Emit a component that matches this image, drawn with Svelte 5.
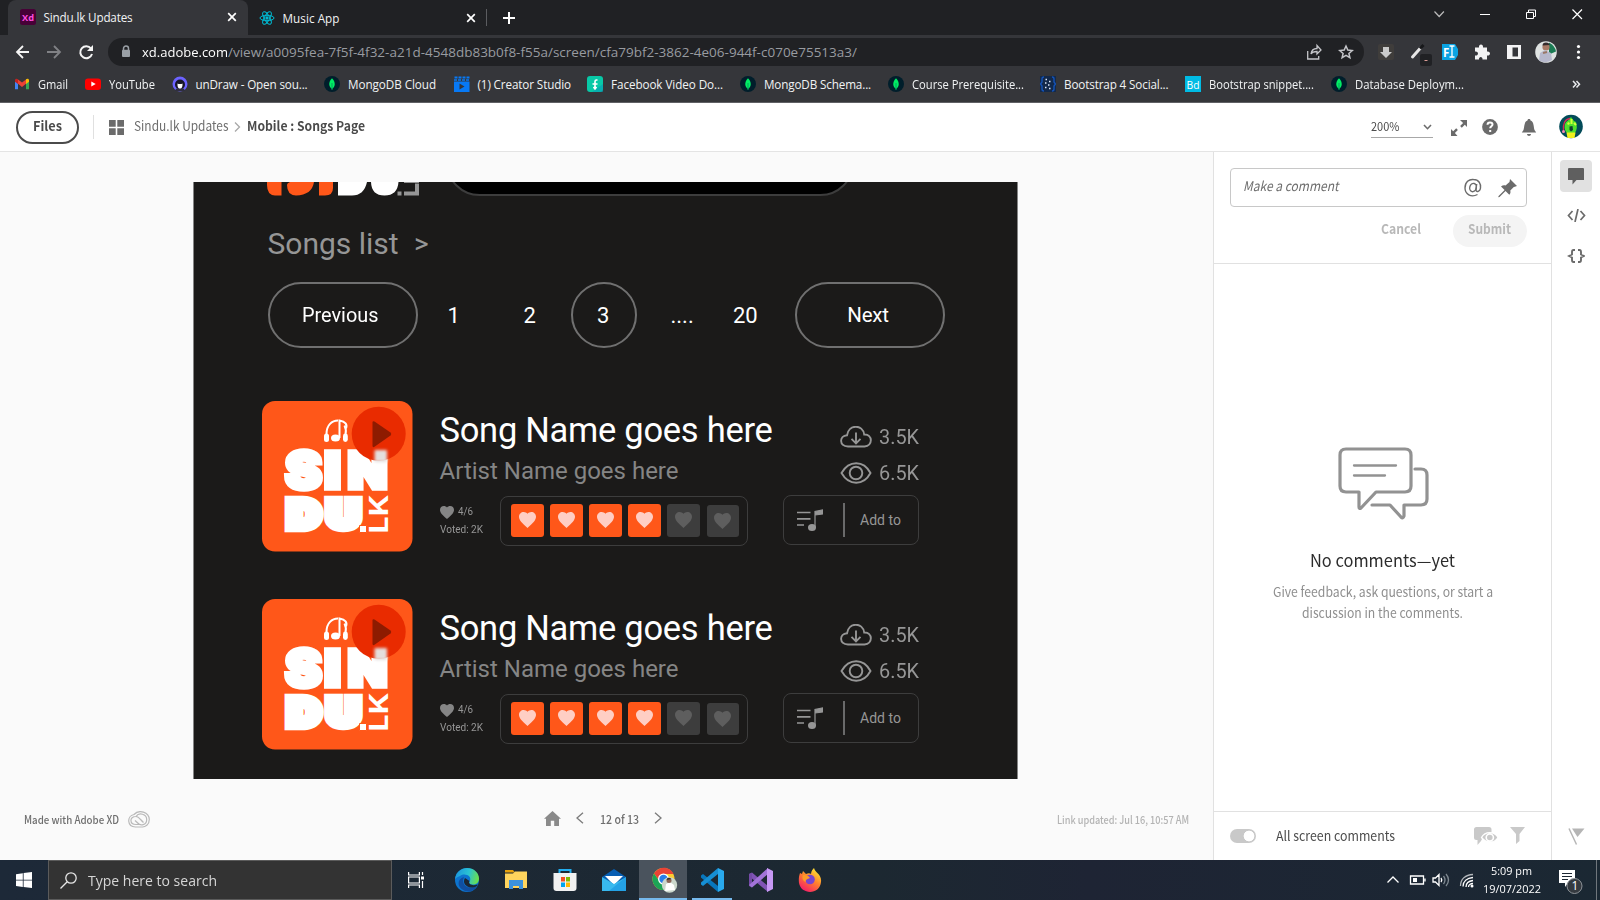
<script>
  // Makes a label take the given width: small differences go into the
  // letter spacing, larger ones condense the glyphs.
  function fit(node, width) {
    if (getComputedStyle(node).display === 'inline') node.style.display = 'inline-block';
    const natural = node.getBoundingClientRect().width;
    const ratio = width / natural;
    if (Math.abs(ratio - 1) < 0.03) {
      node.style.letterSpacing = (width - natural) / [...node.textContent].length + 'px';
    } else {
      node.style.transformOrigin = '0 50%';
      node.style.transform = `scaleX(${ratio})`;
      node.style.width = natural + 'px';
      node.style.marginRight = width - natural + 'px';
    }
  }

  const bookmarks = [
    { icon: 'gmail', text: 'Gmail', w: 30, cell: 71 },
    { icon: 'youtube', text: 'YouTube', w: 46, cell: 86.5 },
    { icon: 'undraw', text: 'unDraw - Open sou...', w: 112, cell: 152.5 },
    { icon: 'mongo', text: 'MongoDB Cloud', w: 88, cell: 129.5 },
    { icon: 'studio', text: '(1) Creator Studio', w: 93.5, cell: 133.5 },
    { icon: 'fvd', text: 'Facebook Video Do...', w: 112, cell: 153 },
    { icon: 'mongo', text: 'MongoDB Schema...', w: 107, cell: 148 },
    { icon: 'mongo', text: 'Course Prerequisite...', w: 112, cell: 152 },
    { icon: 'braces', text: 'Bootstrap 4 Social...', w: 104.5, cell: 145 },
    { icon: 'bd', text: 'Bootstrap snippet....', w: 105, cell: 146 },
    { icon: 'mongo', text: 'Database Deploym...', w: 109, cell: 135 }
  ];

  const songs = [
    { title: 'Song Name goes here', artist: 'Artist Name goes here', downloads: '3.5K', views: '6.5K', rating: 4 },
    { title: 'Song Name goes here', artist: 'Artist Name goes here', downloads: '3.5K', views: '6.5K', rating: 4 }
  ];
  const heart = 'M12 21.4C6 16 2 12.6 2 8.5 2 5.4 4.4 3 7.5 3c1.8 0 3.4.8 4.5 2.1C13.1 3.8 14.7 3 16.5 3 19.6 3 22 5.4 22 8.5c0 4.1-4 7.5-10 12.9z';
</script>

{#snippet bookmarkIcon(kind)}
  <svg width="16" height="16" viewBox="0 0 16 16">
    {#if kind === 'gmail'}
      <path d="M1 3.500v9.800h3V7z" fill="#4285f4" /><path d="M15 3.500v9.800h-3V7z" fill="#34a853" />
      <path d="M4 3.600l4 3 4-3v4.200L8 11 4 7.800z" fill="#ea4335" />
      <path d="M1 4.500C1 2.600 2.700 2.200 4 3.300v4.600L1 5.700z" fill="#c5221f" /><path d="M15 4.500c0-1.900-1.700-2.300-3-1.200v4.600l3-2.200z" fill="#fbbc04" />
    {:else if kind === 'youtube'}
      <rect y="2.500" width="16" height="11.500" rx="3" fill="#f00" /><path d="M6.300 5.600v5l4.400-2.500z" fill="#fff" />
    {:else if kind === 'undraw'}
      <circle cx="8" cy="8" r="7.500" fill="#6c63ff" /><circle cx="8" cy="8.500" r="5" fill="#171628" />
      <path d="M3 15c1-3 2-3 5-3s4 0 5 3z" fill="#2f2e41" /><path d="M5.500 7.500c1 .7 4 .7 5 0 .2 4-1 5-2.500 5s-2.700-1-2.500-5z" fill="#fff" />
    {:else if kind === 'mongo'}
      <circle cx="8" cy="8" r="8" fill="#001e2b" /><path d="M8 2.300C12 6.500 11.300 10.700 8 13 4.700 10.700 4 6.500 8 2.300z" fill="#00ed64" /><path d="M8 7v7" stroke="#00a35c" stroke-width="1" />
    {:else if kind === 'studio'}
      <path d="M0 5.500h15.500V16H0z" fill="#0779f5" /><path d="M0 4h15.500" stroke="#0779f5" stroke-width="1.500" stroke-dasharray="3 1" /><path d="M.5 1.500h15" stroke="#0779f5" stroke-width="2" stroke-dasharray="3 1" /><path d="M5.500 7.500v6l5-3z" fill="#35363a" />
    {:else if kind === 'fvd'}
      <rect width="16" height="16" rx="3" fill="#08c9a7" /><path d="M16 8v8H5z" fill="#0797b6" opacity=".55" /><path d="M10.500 4H9.500Q8 4 8 5.500V13M5.500 8H10.500M6.500 11l1.500 2 1.500-2" fill="none" stroke="#fff" stroke-width="1.600" />
    {:else if kind === 'braces'}
      <path d="M0 0h16v16H0z" fill="#13294a" /><path d="M4 1Q2 1 2 3v3L.5 8 2 10v3q0 2 2 2M12 1q2 0 2 2v3l1.500 2L14 10v3q0 2-2 2" fill="none" stroke="#1453b8" stroke-width="1.400" />
      <path d="M5.500 3.500h1.500M9 5.500h1.500M5 7h1.500M8 9h1.500M5 11.500h1.500M9 12.500h1.500" stroke="#dbe6fa" stroke-width="1.400" />
    {:else}
      <path d="M0 0h16v16H0z" fill="#00bbe4" /><text x="1.500" y="12.500" font-size="11.500" textLength="13" lengthAdjust="spacingAndGlyphs" fill="#fff">Bd</text>
    {/if}
  </svg>
{/snippet}

{#snippet closeX()}
  <svg width="10" height="10" viewBox="0 0 10 10"><path d="M1.200 1.200l7.600 7.600M8.800 1.200L1.200 8.800" stroke="#fff" stroke-width="1.700" /></svg>
{/snippet}

{#snippet cover()}
  <svg class="cover" width="151" height="151" viewBox="0 0 151 151">
    <rect width="150.500" height="150.500" rx="13" fill="#ff5719" />
    <g fill="none" stroke="#fff" stroke-width="2">
      <path d="M64.500 33C64.500 24 70 19.500 76 19.500M83.500 33.500c1-4 0-7-1-9" />
      <path d="M77.500 37V19.500c6 1 8 4 6.500 8" />
    </g>
    <g fill="#fff"><ellipse cx="73.500" cy="37" rx="4.500" ry="3.500" /><rect x="62" y="32.500" width="5" height="8.500" rx="2.500" /><rect x="81" y="32.500" width="4.800" height="8.500" rx="2.400" /></g>
    <g class="brand" fill="#fff" stroke="#fff">
      <text y="87.300" font-size="49" stroke-width="5.500"><tspan x="23.500" textLength="36" lengthAdjust="spacingAndGlyphs">S</tspan><tspan x="62.500" textLength="16" lengthAdjust="spacingAndGlyphs">I</tspan><tspan x="86" textLength="39" lengthAdjust="spacingAndGlyphs">N</tspan></text>
      <text y="126.800" font-size="39" stroke-width="8.500"><tspan x="25.500" textLength="33" lengthAdjust="spacingAndGlyphs">D</tspan><tspan x="65" textLength="33" lengthAdjust="spacingAndGlyphs">U</tspan></text>
      <text class="suffix" transform="translate(125.500 132.500) rotate(-90)" font-size="26" stroke="none" textLength="39" lengthAdjust="spacingAndGlyphs">LK</text>
    </g>
    <path d="M97.500 124.500h7v7h-7z" fill="#fff" stroke="#ff5719" stroke-width="1" />
    <circle cx="116.700" cy="32.800" r="27" fill="#e92b00" />
    <path d="M110.500 21.500v23q0 2.500 2 1.300l16-11.300q1.500-1.500 0-3l-16-11q-2-1-2 1z" fill="#8e1b00" />
    <rect class="glow" x="112.500" y="49" width="12.500" height="12" rx="1" fill="#e4dfde" />
  </svg>
{/snippet}

<div class="screen">
  <header class="browser">
    <div class="tabs">
      <div class="tab active">
        <svg width="16" height="16" viewBox="0 0 16 16"><rect width="16" height="16" rx="2.500" fill="#470137" /><text x="2" y="11.700" font-size="9.500" font-weight="700" textLength="12" lengthAdjust="spacingAndGlyphs" fill="#ff4be0">Xd</text></svg>
        <span use:fit={89}>Sindu.lk Updates</span><i class="fill"></i>{@render closeX()}
      </div>
      <div class="tab second">
        <svg width="16" height="16" viewBox="0 0 16 16" fill="none" stroke="#00bcd4" stroke-width="1"><ellipse cx="8" cy="8" rx="7" ry="2.700" /><ellipse cx="8" cy="8" rx="7" ry="2.700" transform="rotate(60 8 8)" /><ellipse cx="8" cy="8" rx="7" ry="2.700" transform="rotate(120 8 8)" /><circle cx="8" cy="8" r="1.200" fill="#00bcd4" /></svg>
        <span use:fit={57}>Music App</span><i class="fill"></i>{@render closeX()}
      </div>
      <div class="newtab"><svg width="12" height="12" viewBox="0 0 12 12"><path d="M6 0v12M0 6h12" stroke="#fff" stroke-width="2" /></svg></div>
      <div class="winctl">
        <svg width="160" height="20" viewBox="0 0 160 20" fill="none" stroke="#fff"><path d="M4.500 7.500l4.700 5 4.700-5" stroke="#bbb" stroke-width="1.200" /><path d="M50 10.500h10" /><path d="M96.500 8.500h7v6h-7zM98.500 8V6h7v6.500H104" /><path d="M142.500 5.500l9.500 9.500M152 5.500l-9.500 9.500" stroke-width="1.200" /></svg>
      </div>
    </div>
    <div class="toolbar">
      <svg class="nav" width="80" height="16" viewBox="0 0 80 16" fill="none" stroke-width="1.800"><path d="M15 8H3M9 2L3 8l6 6" stroke="#f5f5f5" /><path d="M33 8h13M40 2l6 6-6 6" stroke="#808185" /><path d="M77 4.500A6 6 0 1 0 78 10" stroke="#f5f5f5" stroke-width="2" /><path d="M79 1v6h-6z" fill="#f5f5f5" /></svg>
      <div class="address">
        <svg width="10" height="13" viewBox="0 0 10 13"><path d="M2.500 5V3.500a2.500 2.500 0 0 1 5 0V5" fill="none" stroke="#9aa0a6" stroke-width="1.500" /><rect x="1" y="4.700" width="8" height="7.300" rx="1" fill="#9aa0a6" /></svg>
        <span class="host" use:fit={86}>xd.adobe.com</span><span class="path" use:fit={629}>/view/a0095fea-7f5f-4f32-a21d-4548db83b0f8-f55a/screen/cfa79bf2-3862-4e06-944f-c070e75513a3/</span>
        <i class="fill"></i>
        <svg class="actions" width="48" height="18" viewBox="0 0 48 18" fill="none" stroke="#c4c5c9" stroke-width="1.300"><path d="M1.700 8v8h11v-3M5 11c.5-4 3-5.500 6-5.500V2.500l4 4.500-4 4V8.500c-3 0-4.500 0-6 2.500z" /><path d="M40 3l1.800 4.100 4.400.4-3.300 2.900 1 4.300L40 12.400l-3.900 2.300 1-4.300-3.300-2.900 4.400-.4z" stroke-width="1.500" /></svg>
      </div>
      <svg class="extensions" width="222" height="28" viewBox="0 0 222 28">
        <rect x="0" y="6" width="16" height="16" rx="2" fill="#3f3d3b" /><path d="M5 9h6v5h3l-6 6-6-6h3z" fill="#c9c9c9" />
        <path d="M34.500 19l8-9" stroke="#e7e7e7" stroke-width="3" stroke-linecap="round" /><path d="M42 10.500l3.500-3.500" stroke="#17181a" stroke-width="3" /><rect x="42" y="16" width="12" height="12" rx="2" fill="#202124" /><path d="M46.500 22.500h3" stroke="#d99b94" />
        <path d="M64 6h13l3 5v6l-3 5H64z" fill="#0ba4e3" /><text x="65" y="18.500" font-size="11.500" font-weight="700" fill="#fff">F</text><path d="M71.500 8h5M74 8v11M71.500 19h5" stroke="#fff" stroke-width="1.300" />
        <path d="M98 9.500h3c-.7-4 4.700-4 4 0h4v4c4-.7 4 4.700 0 4v4h-4.500c.5-3.500-4-3.500-3.500 0H97v-4c4 .7 4-4.700 0-4v-4z" fill="#f3f3f4" />
        <path d="M129 7h14v14h-14z" fill="#f3f3f4" /><path d="M134.500 9.500h5.500v9h-5.500z" fill="#35363a" />
        <circle cx="168" cy="14" r="10.800" fill="#dfe3e2" /><path d="M171 4.500q6 3 7 9l-7 3z" fill="#1b7b54" /><circle cx="168" cy="9" r="3.600" fill="#a77a66" /><path d="M164.500 7.500q0-3 3.500-3t3.700 2.500z" fill="#342b2c" /><path d="M161 22.500l1-7.500 5-3 6 3 1 7q-6 4-13 .5z" fill="#b6b8cc" /><path d="M165 15l4-1" stroke="#9a7866" stroke-width="2" />
        <g fill="#fff"><circle cx="200.500" cy="8.500" r="1.600" /><circle cx="200.500" cy="14" r="1.600" /><circle cx="200.500" cy="19.500" r="1.600" /></g>
      </svg>
    </div>
    <nav class="bookmarks">
      {#each bookmarks as b}
        <div class="bookmark" style:width="{b.cell}px">{@render bookmarkIcon(b.icon)}<span use:fit={b.w}>{b.text}</span></div>
      {/each}
      <svg class="more" width="9" height="9" viewBox="0 0 9 9"><path d="M1 1l3 3.200L1 7.500M4.500 1l3 3.200-3 3.300" fill="none" stroke="#e8eaed" stroke-width="1.500" /></svg>
    </nav>
  </header>

  <div class="appbar">
    <div class="files"><b use:fit={29}>Files</b></div>
    <i class="rule"></i>
    <svg class="gridicon" width="15" height="15" viewBox="0 0 15 15"><path d="M0 0h6.700v6.700H0zM8.300 0H15v6.700H8.300zM0 8.300h6.700V15H0zM8.300 8.300H15V15H8.300z" fill="#6b6b6b" /></svg>
    <span class="crumb" use:fit={94.5}>Sindu.lk Updates</span>
    <svg class="sep" width="7" height="10" viewBox="0 0 7 10"><path d="M1 .5L5.500 5 1 9.500" fill="none" stroke="#a8a8a8" stroke-width="1.300" /></svg>
    <b class="here" use:fit={118}>Mobile : Songs Page</b>
    <div class="zoom"><span use:fit={28.5}>200%</span><svg width="9" height="6" viewBox="0 0 9 6"><path d="M1 1l3.500 3.700L8 1" fill="none" stroke="#6b6b6b" stroke-width="1.600" /></svg></div>
    <svg class="tools" width="150" height="26" viewBox="0 0 150 26">
      <g fill="#6b6b6b"><path d="M10 6h7v7l-2.200-2.200-3 3-1.700-1.700 3-3zM1 22v-7l2.200 2.200 3-3 1.700 1.700-3 3L7.500 22z" /><circle cx="40" cy="13" r="7.900" /><path d="M79 5c1.200 0 1.500.7 1.500 1.600C84 7.500 83.500 13 84.500 16l1.700 2.500H71.800L73.500 16c1-3 .5-8.500 4-9.400C77.500 5.700 77.800 5 79 5zM77 20h4c0 2.500-4 2.500-4 0z" /></g>
      <path d="M37.500 10.800c0-3.300 5-3 5-.3 0 1.800-2.300 1.800-2.300 3.800M40.200 16v2" fill="none" stroke="#fff" stroke-width="2" />
      <circle cx="121" cy="12.500" r="11.800" fill="#034b59" /><path d="M117 19c-3-3-3-8-1-11l2-1.500L121 3l3 4 2 1c1.500 4 1 8-1 11z" fill="#4fdf2c" /><path d="M116.500 18.500h9l-1 5.500h-7z" fill="#f0f01e" /><path d="M119.500 12.500l3-.5.5 4-2 1.500-1.500-1.500z" fill="#123d31" /><path d="M121.500 5v5M117.500 10l2-1M124 9l2 2" stroke="#d4ff39" stroke-width="2" fill="none" /><path d="M113.500 17C112.500 10 115 5 120 4.500" fill="none" stroke="#d42857" stroke-width="1.300" /><circle cx="113.500" cy="17.500" r="1.500" fill="#f08bb6" />
    </svg>
  </div>

  <main>
    <section class="stage">
      <div class="board">
        <div class="top">
          <svg width="153" height="14" viewBox="0 0 153 14"><g fill="#ff5719"><path d="M0 0h14.500v13.500H8Q0 13 0 3zM20 3q0-2 3-3h24q-2 13-18 13.500Q20 13 20 3zM52 0h14v6q0 7.500-8 7.500h-6z" /></g><path d="M71 0h29q-3 13.500-15 13.500H71zM104 0h27.500q-1 13.500-14 13.500T104 0z" fill="#fff" /><path d="M130.500 9.500h4v4h-4zM137 9.500h11V1.500h4v12h-15zM137 0h15v1h-15z" fill="#969696" /></svg>
          <div class="search"></div>
        </div>
        <div class="list-title"><span use:fit={131}>Songs list</span><span class="gt">&gt;</span></div>
        <div class="pager">
          <div class="pill"><span class="previous" use:fit={76.5}>Previous</span></div>
          <span class="num one">1</span><span class="num two">2</span>
          <div class="pill current"><span class="num">3</span></div>
          <span class="num dots">....</span><span class="num twenty">20</span>
          <div class="pill"><span class="next" use:fit={41.5}>Next</span></div>
        </div>
        {#each songs as song}
          <article class="song">
            {@render cover()}
            <div class="info">
              <div class="title"><span use:fit={333}>{song.title}</span></div>
              <div class="artist"><span use:fit={239}>{song.artist}</span></div>
              <div class="voting">
                <div class="votes">
                  <div><svg width="14" height="13" viewBox="2 3 20 18.400" preserveAspectRatio="none"><path d={heart} fill="#858585" /></svg><span use:fit={15}>{song.rating}/6</span></div>
                  <div><span use:fit={43}>Voted: 2K</span></div>
                </div>
                <div class="rating">
                  {#each [1, 2, 3, 4, 5, 6] as n}
                    <div class="box" class:on={n <= song.rating} class:last={n === 6}><svg width="17" height="16" viewBox="2 3 20 18.400" preserveAspectRatio="none"><path d={heart} fill="currentColor" /></svg></div>
                  {/each}
                </div>
              </div>
            </div>
            <div class="side">
              <div class="stat"><svg width="32" height="22" viewBox="0 0 32 22" fill="none" stroke="#969696" stroke-width="1.900"><path d="M8 20.500C-1 20-1 10 7 9.300 8.500-2 23-2 24.200 8.500 33 8 33 20 24.500 20.500zM16 6.500v10.500M11.500 12.800L16 17.300l4.500-4.500" /></svg><span use:fit={40}>{song.downloads}</span></div>
              <div class="stat"><svg width="32" height="22" viewBox="0 0 32 22" fill="none" stroke="#969696" stroke-width="1.900"><path d="M1.500 11C9-2 23.500-2 30.500 11 23.500 24 9 24 1.500 11z" /><circle cx="16" cy="11" r="6.300" /></svg><span use:fit={40}>{song.views}</span></div>
              <div class="add"><svg width="26" height="23" viewBox="0 0 26 23"><path d="M0 3.500h13.500M0 9.800h13.500M0 16h7" stroke="#969696" stroke-width="1.700" /><ellipse cx="15" cy="18.500" rx="4" ry="3.500" fill="#969696" /><path d="M18 19V2.500L25.500 1v4L18 6" fill="#969696" stroke="#969696" stroke-width="1.200" /></svg><i></i><span use:fit={41}>Add to</span></div>
            </div>
          </article>
        {/each}
      </div>
      <footer class="stagefoot">
        <div class="made"><span use:fit={95}>Made with Adobe XD</span><svg width="22" height="17" viewBox="0 0 22 17" fill="none" stroke="#b9b9b9" stroke-width="1.200"><path d="M7.500 16C-1 16-1.500 5 6 3.500 11-2 21 1 21.300 8.500 21.300 14 17 16 14.500 16z" /><path d="M13 13.500H8c-6.500 0-7-8 0-8 3 0 4.500 3.500 7.500 6M8 5.500C11 1 18.700 3 18.700 8.500c0 6-6.500 6.500-9 3.500L7 9.500" /></svg></div>
        <div class="pages">
          <svg width="17" height="15" viewBox="0 0 17 15"><path d="M8.500 0L17 7.800h-2V15h-4.800V9.800H6.800V15H2V7.800H0z" fill="#8a8a8a" /></svg>
          <svg class="prev" width="8" height="12" viewBox="0 0 8 12"><path d="M7 .7L1 6l6 5.300" fill="none" stroke="#7b7b7b" stroke-width="1.300" /></svg>
          <span use:fit={39}>12 of 13</span>
          <svg class="fwd" width="8" height="12" viewBox="0 0 8 12"><path d="M1 .7L7 6l-6 5.300" fill="none" stroke="#7b7b7b" stroke-width="1.300" /></svg>
        </div>
        <i class="fill"></i>
        <span class="updated" use:fit={132}>Link updated: Jul 16, 10:57 AM</span>
      </footer>
    </section>

    <aside class="comments">
      <div class="compose">
        <div class="field"><em use:fit={95.5}>Make a comment</em><i class="fill"></i>
          <svg width="54" height="20" viewBox="0 0 54 20"><g fill="none" stroke="#6b6b6b" stroke-width="1.400"><path d="M13.500 16.500C7 20 1 16 1 10s4-9 8.500-8.500C15 1.500 17 6 16.500 10c-.5 4-5 5-4.500 1L12.700 6" /><ellipse cx="9.200" cy="9.500" rx="3.300" ry="4.200" transform="rotate(15 9 9)" /></g><path d="M46 1l7 7-2.200.8-1 .2-3.500 3.500c.5 2 0 3.500-1 4.200l-3.800-3.800-6 6-1.300.4.400-1.300 6-6-3.600-3.600c1.500-1.200 3-1.300 4.500-1L45.500 4z" fill="#6b6b6b" /></svg>
        </div>
        <div class="buttons"><b use:fit={40}>Cancel</b><div class="submit"><b use:fit={43}>Submit</b></div></div>
      </div>
      <div class="empty">
        <svg width="92" height="73" viewBox="0 0 92 73" fill="none" stroke="#929292" stroke-width="3.200" stroke-linejoin="round" stroke-linecap="round"><path d="M9 2h59q6 0 6 6v31q0 6-6 6H39L24 61q-2 1-2-1V45H9q-6 0-6-6V8q0-6 6-6z" /><path d="M78 22h6q6 0 6 6v24q0 6-6 6H67v11q-1 3-3 1L53 58H35" /><path d="M17 18.500h42M17 28.500h31" stroke-width="2.300" /></svg>
        <h2><span use:fit={145}>No comments—yet</span></h2>
        <p><span use:fit={220}>Give feedback, ask questions, or start a</span></p>
        <p><span use:fit={161}>discussion in the comments.</span></p>
      </div>
      <footer class="filter">
        <i class="toggle"></i><span use:fit={119}>All screen comments</span><i class="fill"></i>
        <svg width="52" height="20" viewBox="0 0 52 20"><path d="M2.500 1h12.500q2.500 0 2.500 2.500v5L10 9l-3 6-3.500 4v-5h-1Q0 14 0 11.500v-8Q0 1 2.500 1z" fill="#c9c9c9" /><path d="M7.500 11.500C11 5 20.500 5 24 11.500 20.500 17.500 12 17.500 7.500 11.500z" fill="#c9c9c9" stroke="#fff" stroke-width="1.300" /><circle cx="15.800" cy="11.500" r="3.600" fill="#c9c9c9" stroke="#fff" stroke-width="1.600" /><path d="M36 1h15l-5.500 7v7L42 18V8z" fill="#c9c9c9" /></svg>
      </footer>
    </aside>

    <aside class="rail">
      <div class="railbtn on"><svg width="16" height="17" viewBox="0 0 16 17"><path d="M1 0h14q1 0 1 1v11H8.500L4.500 16.500V12H0V1q0-1 1-1z" fill="#5f5f5f" /></svg></div>
      <div class="railbtn code"><svg width="19" height="13" viewBox="0 0 19 13" fill="none" stroke="#6b6b6b" stroke-width="1.700"><path d="M5.500 2L1.500 6.500l4 4.500M13.500 2l4 4.500-4 4.500M11 0L8 13" /></svg></div>
      <div class="railbtn"><svg width="18" height="14" viewBox="0 0 18 14" fill="none" stroke="#6b6b6b" stroke-width="1.900"><path d="M8 1H6.500Q5 1 5 3v2.500L2 7l3 1.500V11q0 2 1.500 2H8M11 1h1.500Q14 1 14 3v2.500L17 7l-3 1.500V11q0 2-1.500 2H11" /></svg></div>
      <svg class="flag" width="17" height="17" viewBox="0 0 17 17"><path d="M1 .5l7.500 16" stroke="#b5b5b5" stroke-width="1.500" /><path d="M4 .5h12.500L9.500 9z" fill="#b5b5b5" /></svg>
    </aside>
  </main>

  <footer class="taskbar">
    <div class="start"><svg width="16" height="16" viewBox="0 0 16 16"><path d="M0 2.200L6.800 1.200v6.500H0zM7.600 1L16 0v7.700H7.600zM0 8.400h6.800v6.500L0 13.900zM7.600 8.400H16V16l-8.400-1z" fill="#fff" /></svg></div>
    <div class="find"><svg width="17" height="17" viewBox="0 0 17 17" fill="none" stroke="#e6e6e6" stroke-width="1.300"><circle cx="11" cy="6" r="5.200" /><path d="M7.200 9.800L.5 16.500" /></svg><span use:fit={129}>Type here to search</span></div>
    <div class="task view"><svg width="16" height="16" viewBox="0 0 16 16" fill="none" stroke="#fff" stroke-width="1.200"><path d="M.6 0v3h10.800V0M.6 16v-3h10.800v3M.6 5h10.800v6H.6zM14.500 0v3M14.500 9v7" /><path d="M13 4.500h3v3h-3z" fill="#fff" stroke="none" /></svg></div>
    <div class="task"><svg width="24" height="24" viewBox="0 0 24 24"><defs><linearGradient id="edge" x1="0" y1=".3" x2="1" y2=".5"><stop offset="0" stop-color="#1b95dd" /><stop offset=".55" stop-color="#2ac3d3" /><stop offset="1" stop-color="#6be04b" /></linearGradient></defs><circle cx="12" cy="12" r="12" fill="#0d74ce" /><path d="M0 11C1 4 6 0 12 0c7 0 12 5 12 10.500 0 5-4 6.500-7 6-3-.4-3-2-2-3.500 2-5-5-8.500-10-5Q2 9 0 11z" fill="url(#edge)" /><path d="M8 12c0 7 6 9.500 14 6.500-4 6-11 6.500-16 2-4-4-3-10 3-11.500z" fill="#104ea0" /><path d="M10 10c-3 5 1 9 6 9.500 3 0 4-.5 6-1.500 1-1 1-2-.5-1.300-4 1.500-9-.7-7-3.700z" fill="#1d2733" /></svg></div>
    <div class="task"><svg width="22" height="20" viewBox="0 0 22 20"><path d="M0 0h8l2 2.500H0z" fill="#e8a20c" /><path d="M0 3.500h8L10 1.500h12V18H0z" fill="#ffd45d" /><path d="M4 19v-9h14v9h-4v-3H8v3z" fill="#3c91dc" /></svg></div>
    <div class="task"><svg width="24" height="24" viewBox="0 0 24 24"><path d="M6.500 7V2h11v5" fill="none" stroke="#22aef0" stroke-width="2" /><path d="M.5 5h23v15q0 3-3 3h-17q-3 0-3-3z" fill="#f1f1f1" /><path d="M8 9h4v4.500H8z" fill="#f25022" /><path d="M13 9h4v4.500h-4z" fill="#7fba00" /><path d="M8 14.500h4V19H8z" fill="#00a4ef" /><path d="M13 14.500h4V19h-4z" fill="#ffb900" /></svg></div>
    <div class="task"><svg width="24" height="22" viewBox="0 0 24 22"><path d="M0 8L12 0l12 8-12 8z" fill="#075eb3" /><path d="M3 7h18l-9 9z" fill="#fff" /><path d="M0 8l12 7 12-7v14H0z" fill="#38b9ef" /><path d="M24 8L7 22h17z" fill="#1490df" opacity=".55" /></svg></div>
    <div class="task selected"><svg width="26" height="26" viewBox="0 0 26 26"><circle cx="11.500" cy="12" r="11" fill="#ffcc30" /><path d="M2 6.500C7-1.500 18-1 21.500 7h-10l-4 7z" fill="#e94335" /><path d="M2 6.500A11 11 0 0 0 12 23l4-7-8-1z" fill="#1ca456" /><circle cx="11.500" cy="12" r="5.500" fill="#fff" /><circle cx="11.500" cy="12" r="4.200" fill="#287ee8" /><circle cx="17.500" cy="18" r="7.700" fill="#cbd7cc" /><path d="M13 24l1-7 4-2 4 3 1 5z" fill="#fff" /><circle cx="17" cy="13.500" r="2.500" fill="#8b6457" /><path d="M14.500 13q1-4 5-1z" fill="#352d2e" /></svg></div>
    <div class="task open"><svg width="24" height="24" viewBox="0 0 24 24"><path d="M1 7.500l2-1.500L18 18v6L1 9.500z" fill="#0877bd" /><path d="M1 16.500l2 1.500L18 6V0L1 14.500z" fill="#168fd4" /><path d="M18 0l6 3v18l-6 3z" fill="#29a9ed" /></svg></div>
    <div class="task"><svg width="24" height="24" viewBox="0 0 24 24"><path d="M0 6l3-1.500L19 18v6L0 8z" fill="#8053b5" /><path d="M0 6v12l3 1.500V5z" fill="#754ba7" /><path d="M3 19.500L19 6V0L0 17z" fill="#a273d8" /><path d="M18 0l6 3v18l-6 3z" fill="#c798f4" /></svg></div>
    <div class="task"><svg width="24" height="24" viewBox="0 0 24 24"><defs><linearGradient id="fox" x1=".8" y1="0" x2=".2" y2="1"><stop offset="0" stop-color="#ffed35" /><stop offset=".45" stop-color="#ff842c" /><stop offset="1" stop-color="#f5156c" /></linearGradient></defs><path d="M2 5l2 1 1-3 3 3c2-1 4-1 5 0 0-3 2-5 3-6 1 5 8 6 7 14-1 13-20 13-22 1-.500-4 0-7 1-10z" fill="url(#fox)" /><circle cx="12" cy="11.500" r="4.800" fill="#7945cf" /><path d="M5 7c3 0 5 0 7 3-3 1-5 2-4 4-4-1-4-5-3-7z" fill="#ff9b27" /></svg></div>
    <svg class="tray" width="88" height="20" viewBox="0 0 88 20" fill="none" stroke="#fff" stroke-width="1.300"><path d="M.5 12.500L6 7l5.500 5.500" /><path d="M23.500 6h13v8h-13zM38 8.500v3" /><path d="M26 8h4v4h-4z" fill="#fff" stroke="none" /><path d="M46 8h2.500L52 4.500v11L48.500 12H46zM54 8q1.500 2 0 4" /><path d="M56.500 6q3 4 0 8M59 4q5 6 0 12" stroke="#7f8991" /><path d="M76 16.500c0-5 4-8.500 10-9M79 17c0-3.500 3-6 7-6.500M81.500 17c0-2 2-3.500 4.500-3.500" /><path d="M73.500 16c0-7 5-11 12.500-11.500" stroke="#b3b7bb" /><circle cx="85" cy="16" r="1.500" fill="#fff" stroke="none" /></svg>
    <div class="clock"><span use:fit={41}>5:09 pm</span><span use:fit={58}>19/07/2022</span></div>
    <svg class="notice" width="24" height="26" viewBox="0 0 24 26"><path d="M0 0h16v13H9l-3 4v-4H0z" fill="#fff" /><path d="M3 3.500h10M3 6.500h10M3 9.500h6" stroke="#1d2733" stroke-width="1.200" /><circle cx="15.500" cy="16" r="7.500" fill="#353a40" stroke="#8e9398" /><text x="12.500" y="20.200" font-size="12" fill="#fff">1</text></svg>
    <i class="peek"></i>
  </footer>
</div>

<style>
  :global(body) { margin: 0; overflow: hidden; }
  .screen { width: 1600px; height: 900px; display: flex; flex-direction: column; overflow: hidden; font-family: "Noto Sans CJK SC", "Open Sans", sans-serif; }
  .screen * { box-sizing: border-box; }
  svg { display: block; flex: none; }
  span, b, em { white-space: nowrap; flex: none; }
  .fill { flex: 1; }

  .browser { height: 103px; flex: none; background: #35363a; border-bottom: 1px solid #606165; font: 11.700px/16px "Open Sans", sans-serif; color: #f1f3f4; }
  .tabs { height: 35px; background: #202124; display: flex; align-items: center; padding-left: 8px; }
  .tab { height: 35px; width: 240px; display: flex; align-items: center; padding: 0 11px 2px 12px; }
  .tab span { margin-left: 7.500px; }
  .tab.active { background: #35363a; border-radius: 8px 8px 0 0; }
  .tab.second { width: 239px; height: 17px; border-right: 1px solid #5b5c60; padding: 0 10px 0 11px; }
  .newtab { padding-left: 16px; }
  .winctl { margin: -7px 10px 0 auto; }
  .toolbar { height: 33px; display: flex; align-items: center; }
  .nav { margin: 0 14px 0 14px; }
  .address { width: 1256px; height: 28px; border-radius: 14px; background: #202124; display: flex; align-items: center; padding-left: 13px; font-size: 13.500px; }
  .host { margin-left: 11px; color: #fff; }
  .path { color: #989ba0; }
  .actions { margin-right: 10px; }
  .extensions { margin-left: 14px; }
  .bookmarks { height: 32px; display: flex; align-items: center; padding-left: 14px; }
  .bookmark { display: flex; align-items: center; gap: 8px; flex: none; }
  .more { margin-left: auto; margin-right: 19px; }

  .appbar { height: 49px; flex: none; background: #fff; border-bottom: 1px solid #e4e4e4; display: flex; align-items: center; font-size: 13.300px; line-height: 18px; color: #6e6e6e; }
  .appbar span, .appbar b { margin-top: -2px; }
  .files { width: 63px; height: 33px; margin-left: 16px; border: 2px solid #4b4b4b; border-radius: 17px; color: #4b4b4b; display: flex; align-items: center; justify-content: center; }
  .rule { width: 1px; height: 24px; background: #e0e0e0; margin: 0 15px 0 14px; }
  .crumb { margin-left: 9.500px; }
  .sep { margin: 0 6px 0 6px; }
  .here { color: #4b4b4b; }
  .zoom { width: 62px; height: 22px; margin-left: auto; border-bottom: 1px solid #a8a8a8; display: flex; align-items: center; justify-content: space-between; font-size: 11.500px; color: #4b4b4b; padding-right: 1px; }
  .tools { margin-left: 17px; }

  main { height: 708px; flex: none; display: flex; background: #fff; }
  .stage { width: 1213px; background: #fafafa; }
  .board { width: 825px; height: 597px; margin: 30px 0 0 193px; background: #1b1a19; border: solid #858585; border-width: 0 1px; overflow: hidden; font-family: Roboto, sans-serif; color: #969696; }
  .top { height: 14px; display: flex; padding-left: 73px; }
  .search { width: 408px; height: 67px; margin: -53px 0 0 26px; background: #000; border: 2px solid #3d3d3d; border-radius: 34px; flex: none; }
  .list-title { display: flex; margin: 30px 0 0 73.500px; font-size: 30px; line-height: 36px; }
  .gt { margin-left: 15.500px; font-size: 28px; }
  .pager { display: flex; align-items: center; margin: 20px 0 0 73.500px; height: 66px; color: #fff; }
  .pill { width: 150px; height: 66px; border: 2px solid #707070; border-radius: 33px; display: flex; align-items: center; justify-content: center; font-size: 20.500px; flex: none; }
  .pill .previous { margin-left: -5px; }
  .pill .next { margin-left: -4px; }
  .num { font-size: 22px; }
  .one { width: 76px; padding-left: 30px; }
  .two { width: 77.500px; padding-left: 30px; }
  .pill.current { width: 66px; padding-right: 1.500px; }
  .dots { width: 63px; padding-left: 33.500px; }
  .twenty { width: 95px; padding-left: 33px; }
  .pager + .song { margin-top: 53px; }
  .song { height: 151px; margin: 0 0 47px 68px; display: flex; }
  .brand { font-family: Inter, sans-serif; font-weight: 900; }
  .suffix { font-weight: 700; }
  .glow { filter: blur(1.5px); }
  .info { width: 343.500px; margin-left: 26px; }
  .title { font-size: 34.500px; line-height: 40px; margin: 9px 0 0 .5px; color: #fff; }
  .artist { font-size: 24px; line-height: 30px; margin: 6px 0 0 .5px; color: #858585; }
  .voting { display: flex; margin-top: 9.500px; }
  .votes { width: 61px; font-size: 10.500px; line-height: 18px; padding: 7.500px 0 0 .5px; }
  .votes div { display: flex; align-items: center; gap: 4px; }
  .rating { width: 248px; height: 50px; border: 1px solid #3d3d3d; border-radius: 8px; display: flex; align-items: center; gap: 6.200px; padding: 0 0 1px 9.500px; flex: none; }
  .box { width: 33px; height: 33px; border-radius: 3px; background: #3d3d3d; color: #5e5e5e; display: flex; align-items: center; justify-content: center; flex: none; }
  .box.on { background: #ff5719; color: #ffcec4; }
  .box.last { width: 32px; height: 32px; margin: 1px 0 0 .5px; }
  .side { margin-top: 22px; }
  .stat { display: flex; align-items: center; height: 35px; margin-left: 57.500px; gap: 7px; font-size: 20.500px; line-height: 24px; }
  .stat:first-child { margin-top: -3.500px; height: 35.500px; }
  .add { width: 136px; height: 50px; margin: 5px 0 0 0; border: 1px solid #3d3d3d; border-radius: 8px; display: flex; align-items: center; padding-left: 13px; font-size: 14px; }
  .add i { width: 2px; height: 34px; background: #6a6a6a; margin: 0 15.500px 0 20px; }

  .stagefoot { display: flex; align-items: center; height: 26px; margin: 27px 24.500px 0 24px; padding-top: 1px; font-size: 11px; line-height: 16px; color: #6e6e6e; font-weight: 500; }
  .made { display: flex; align-items: center; gap: 9px; width: 520px; }
  .stagefoot span { margin-top: -1px; }
  .pages { display: flex; align-items: center; }
  .pages span { font-size: 12px; margin-left: 15.500px; }
  .pages svg { margin-top: -3px; }
  .pages .prev { margin-left: 15px; }
  .pages .fwd { margin-left: 15px; }
  .updated { color: #b3b3b3; }

  .comments { width: 338px; border-left: 1px solid #e1e1e1; display: flex; flex-direction: column; }
  .compose { height: 112px; border-bottom: 1px solid #e1e1e1; padding: 16px 24.500px 0 16px; font-size: 13.300px; line-height: 20px; }
  .field { height: 39px; border: 1px solid #c8c8c8; border-radius: 4px; display: flex; align-items: center; padding: 0 8px 0 12px; color: #6e6e6e; }
  .field em { margin-top: -3px; }
  .buttons { display: flex; align-items: center; justify-content: flex-end; margin-top: 8px; color: #b8b8b8; }
  .buttons b { margin-top: -4px; }
  .submit { width: 74px; height: 32px; margin-left: 32px; border-radius: 16px; background: #f4f4f4; display: flex; align-items: center; justify-content: center; }
  .empty { flex: 1; display: flex; flex-direction: column; align-items: center; padding: 183px 0 0 0; color: #8e8e8e; }
  h2 { margin: 26.500px 0 8px; font-size: 17px; line-height: 26px; font-weight: 400; color: #2c2c2c; display: flex; }
  p { margin: 0; font-size: 13.500px; line-height: 21px; display: flex; }
  .filter { height: 49px; border-top: 1px solid #e1e1e1; display: flex; align-items: center; padding-left: 16px; font-size: 13.500px; line-height: 20px; color: #4b4b4b; }
  .filter span { margin-top: -2px; }
  .toggle { width: 26px; height: 14px; border-radius: 7px; background: radial-gradient(circle at 19px 7px, #fff 5px, #c9c9c9 5.700px); margin-right: 20px; }
  .filter svg { margin-right: 25px; }
  .rail { width: 49px; border-left: 1px solid #e1e1e1; display: flex; flex-direction: column; align-items: center; padding-top: 8px; gap: 8px; }
  .railbtn { width: 32px; height: 32px; border-radius: 4px; display: flex; align-items: center; justify-content: center; }
  .railbtn.on { background: #e1e1e1; }
  .railbtn.code { padding-bottom: 1px; }
  .flag { margin: auto 0 15px; }

  .taskbar { height: 40px; flex: none; background: linear-gradient(90deg, #1d2938, #1c2831 55%, #1e2434 68%, #1b2833); display: flex; align-items: center; font-family: "Open Sans", sans-serif; color: #fff; }
  .start { width: 48px; display: flex; justify-content: center; }
  .find { width: 344px; height: 40px; background: #333; border: 1px solid #5b5b5b; display: flex; align-items: center; padding-left: 11px; gap: 11px; font-size: 15px; color: #d6d6d6; }
  .task { width: 49px; height: 40px; display: flex; align-items: center; justify-content: center; flex: none; }
  .task.view { width: 50.500px; padding-right: 3px; }
  .task.selected { width: 48px; margin: 0 .5px; background: #4a535d; border-bottom: 2px solid #76b9ed; padding: 2px 0 0 3px; }
  .task.open { background: linear-gradient(#76b9ed, #76b9ed) 50% 100% / 40px 2px no-repeat; }
  .tray { margin-left: auto; margin-right: 6px; }
  .clock { width: 62px; display: flex; flex-direction: column; align-items: center; font-size: 11.500px; line-height: 18px; padding-right: 1px; }
  .notice { margin: 6px 0 0 16px; }
  .peek { width: 1px; height: 40px; background: #70767c; margin: 0 3px 0 13px; }
</style>
